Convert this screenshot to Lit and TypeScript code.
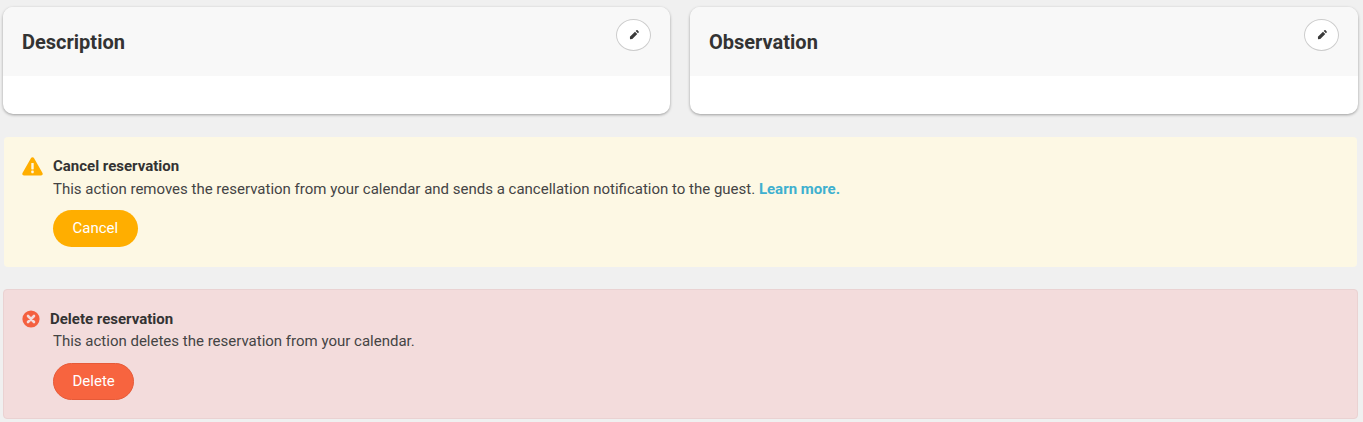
import { html, css, LitElement, svg } from 'lit'
import { customElement } from 'lit/decorators.js'

const pencil = svg`<path d="M7.2 2.1 9.9 4.8 3.9 10.8 1.2 11 1.1 8.2Z M8 1.3 8.9 .4C9.3 0 9.9 0 10.3 .4L11.6 1.7C12 2.1 12 2.7 11.6 3.1L10.7 4Z"/>`

@customElement('app-root')
export class AppRoot extends LitElement {
  static styles = css`
    :host {
      display: block;
      min-height: 422px;
      background: #f0f0f0;
      font-family: Roboto, 'Liberation Sans', sans-serif;
      color: #333;
      box-sizing: border-box;
      padding: 7px 5px 3px 3px;
    }

    .cards {
      display: grid;
      grid-template-columns: 667px 668px;
      gap: 20px;
      margin-bottom: 23px;
    }

    .card {
      height: 107px;
      background: #fff;
      border-radius: 10px;
      box-shadow: 0 1px 3px rgba(0, 0, 0, 0.35);
    }

    .card-head {
      height: 69px;
      box-sizing: border-box;
      background: #f8f8f8;
      border-radius: 10px 10px 0 0;
      padding: 12px 19px 0;
      display: flex;
      justify-content: space-between;
      align-items: flex-start;
    }

    h2 {
      margin: 10px 0 0;
      font-size: 20px;
      line-height: 27px;
      font-weight: 700;
    }

    .edit {
      width: 35px;
      height: 32px;
      box-sizing: border-box;
      padding: 0;
      border: 1px solid #ccc;
      border-radius: 50%;
      background: #fff;
      display: flex;
      align-items: center;
      justify-content: center;
    }

    .edit svg {
      width: 10px;
      height: 10px;
      fill: #3a3a3a;
    }

    .alert {
      box-sizing: border-box;
      border-radius: 4px;
      height: 130px;
    }

    .warn {
      background: #fdf8e4;
      margin: 0 1px 22px;
      padding: 19px 18px 0;
    }

    .danger {
      background: #f3dcdc;
      border: 1px solid #ead2d2;
      padding: 19px 18px 0;
    }

    .title {
      display: flex;
      align-items: center;
      height: 20px;
      font-size: 15px;
      font-weight: 700;
    }

    .warn .title svg {
      width: 21px;
      height: 19px;
      margin-right: 10px;
    }

    .danger .title svg {
      width: 18px;
      height: 18px;
      margin-right: 10px;
    }

    .body {
      margin: 3px 0 0 31px;
      font-size: 15px;
      line-height: 20px;
      color: #444;
    }

    .danger .body {
      margin-top: 2px;
    }

    a {
      color: #3fb0cf;
      font-weight: 700;
      text-decoration: none;
    }

    .btn {
      display: block;
      box-sizing: border-box;
      margin: 11px 0 0 31px;
      height: 37px;
      padding: 0 19.5px 2px;
      border: none;
      border-radius: 19px;
      color: #fff;
      font: 15px Roboto, 'Liberation Sans', sans-serif;
    }

    .btn.amber {
      background: #ffae00;
    }

    .btn.red {
      margin-top: 12px;
      padding: 0 18.5px 2px;
      background: #f7643f;
      border: 1px solid #e65a38;
    }
  `

  private card(title: string) {
    return html`
      <section class="card">
        <div class="card-head">
          <h2>${title}</h2>
          <button class="edit" aria-label="Edit">
            <svg viewBox="0 0 12 12">${pencil}</svg>
          </button>
        </div>
      </section>
    `
  }

  render() {
    return html`
      <div class="cards">
        ${this.card('Description')} ${this.card('Observation')}
      </div>

      <div class="alert warn">
        <div class="title">
          <svg viewBox="0 0 21 19">
            <path
              d="M10.5 .3C11.2 .3 11.8 .7 12.1 1.3L20.5 16C21.1 17.1 20.4 18.6 19 18.6H2C.6 18.6 -.1 17.1 .5 16L8.9 1.3C9.2 .7 9.8 .3 10.5 .3Z"
              fill="#ffae00"
            />
            <rect x="9.3" y="6" width="2.4" height="6.4" rx=".6" fill="#fdf8e4" />
            <rect x="9.3" y="13.6" width="2.4" height="2.6" rx=".6" fill="#fdf8e4" />
          </svg>
          Cancel reservation
        </div>
        <div class="body">
          This action removes the reservation from your calendar and sends a
          cancellation notification to the guest.
          <a href="#">Learn more.</a>
        </div>
        <button class="btn amber">Cancel</button>
      </div>

      <div class="alert danger">
        <div class="title">
          <svg viewBox="0 0 18 18">
            <circle cx="9" cy="9" r="8.6" fill="#f4603f" />
            <path
              d="M6 6 12 12M12 6 6 12"
              stroke="#f3dcdc"
              stroke-width="2.6"
              stroke-linecap="round"
            />
          </svg>
          Delete reservation
        </div>
        <div class="body">This action deletes the reservation from your calendar.</div>
        <button class="btn red">Delete</button>
      </div>
    `
  }
}
